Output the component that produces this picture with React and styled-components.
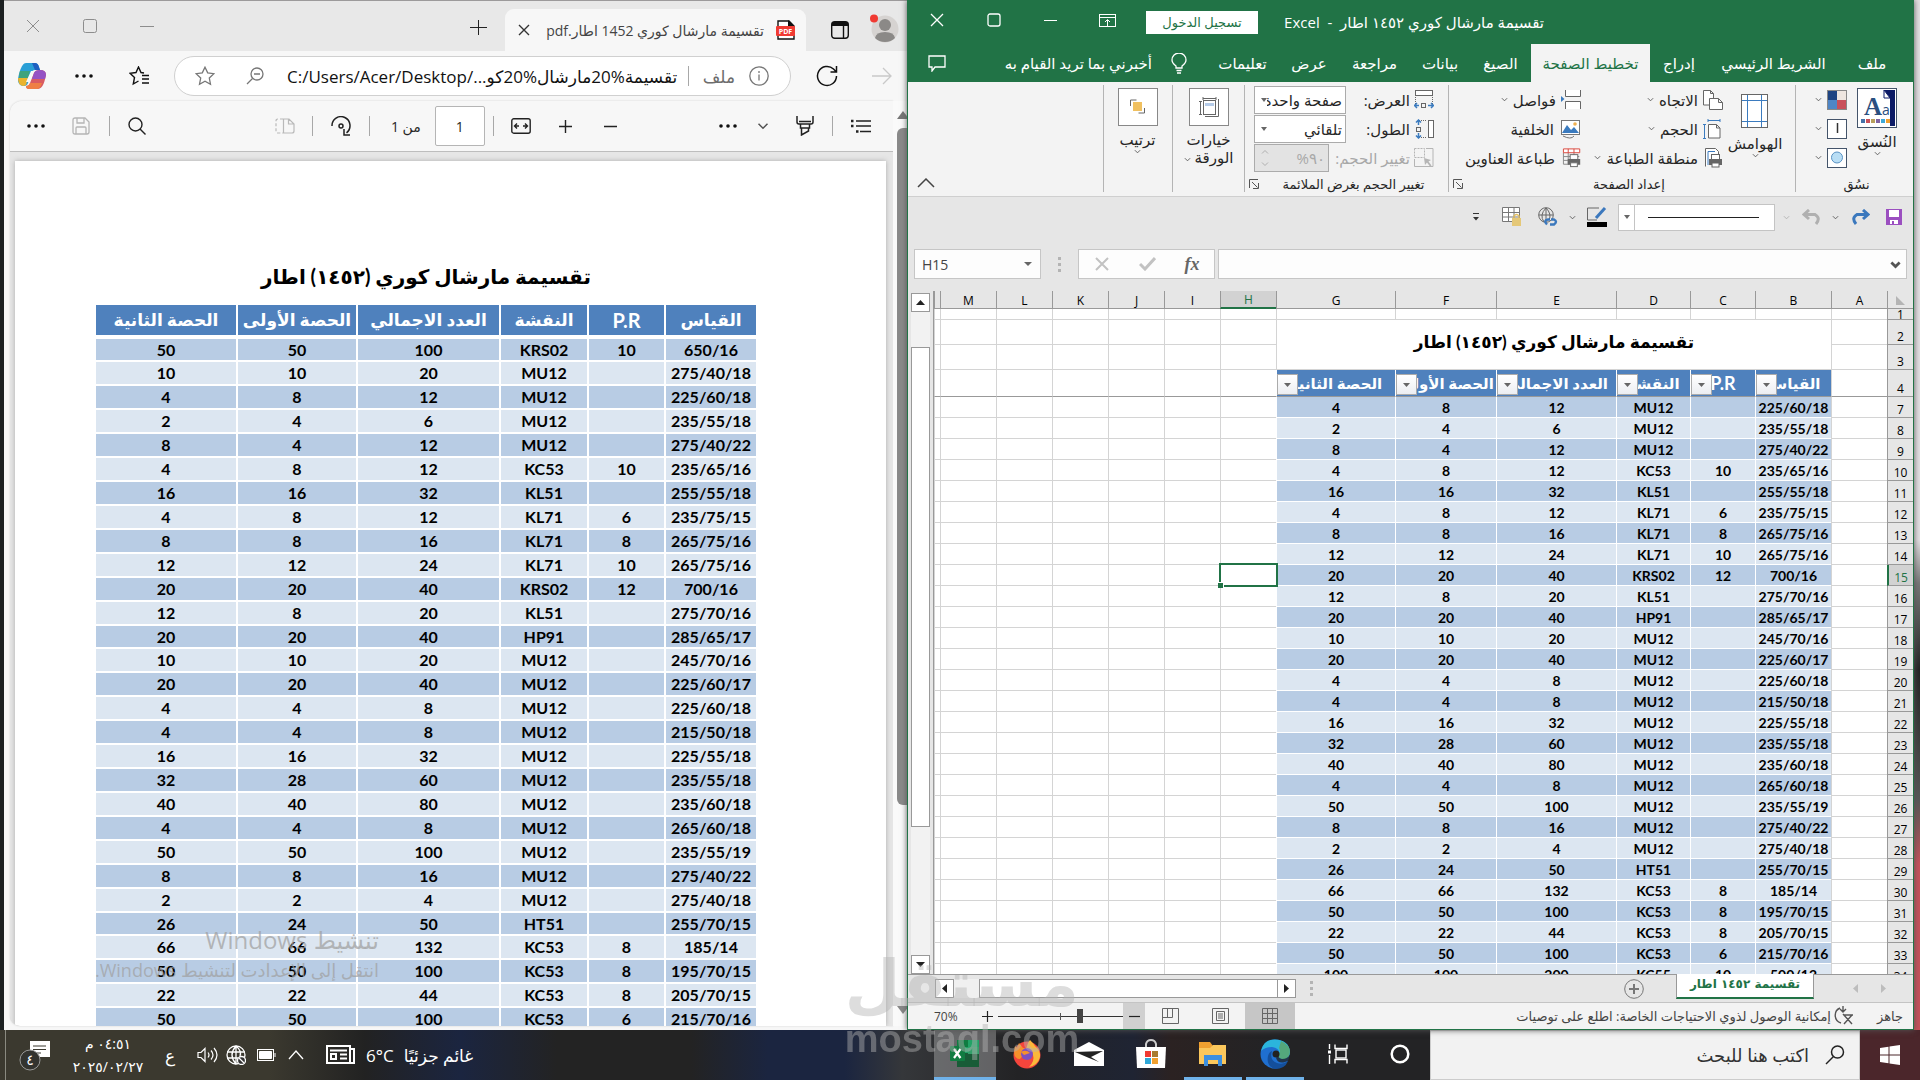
import React from "react";
import styled, { createGlobalStyle, css } from "styled-components";

const GlobalStyle = createGlobalStyle`
  * { box-sizing: border-box; }
  body {
    margin: 0;
    overflow: hidden;
    font-family: "Open Sans", "Noto Sans", "DejaVu Sans", sans-serif;
    font-size: 14px;
    color: #262626;
  }
  button, input, select {
    font: inherit;
    color: inherit;
    border: 0;
    padding: 0;
    margin: 0;
    background: none;
  }
  svg { direction: ltr; }
`;

const PLAN = [
  ["650/16", "10", "KRS02", 100, 50, 50],
  ["275/40/18", "", "MU12", 20, 10, 10],
  ["225/60/18", "", "MU12", 12, 8, 4],
  ["235/55/18", "", "MU12", 6, 4, 2],
  ["275/40/22", "", "MU12", 12, 4, 8],
  ["235/65/16", "10", "KC53", 12, 8, 4],
  ["255/55/18", "", "KL51", 32, 16, 16],
  ["235/75/15", "6", "KL71", 12, 8, 4],
  ["265/75/16", "8", "KL71", 16, 8, 8],
  ["265/75/16", "10", "KL71", 24, 12, 12],
  ["700/16", "12", "KRS02", 40, 20, 20],
  ["275/70/16", "", "KL51", 20, 8, 12],
  ["285/65/17", "", "HP91", 40, 20, 20],
  ["245/70/16", "", "MU12", 20, 10, 10],
  ["225/60/17", "", "MU12", 40, 20, 20],
  ["225/60/18", "", "MU12", 8, 4, 4],
  ["215/50/18", "", "MU12", 8, 4, 4],
  ["225/55/18", "", "MU12", 32, 16, 16],
  ["235/55/18", "", "MU12", 60, 28, 32],
  ["235/60/18", "", "MU12", 80, 40, 40],
  ["265/60/18", "", "MU12", 8, 4, 4],
  ["235/55/19", "", "MU12", 100, 50, 50],
  ["275/40/22", "", "MU12", 16, 8, 8],
  ["275/40/18", "", "MU12", 4, 2, 2],
  ["255/70/15", "", "HT51", 50, 24, 26],
  ["185/14", "8", "KC53", 132, 66, 66],
  ["195/70/15", "8", "KC53", 100, 50, 50],
  ["205/70/15", "8", "KC53", 44, 22, 22],
  ["215/70/16", "6", "KC53", 100, 50, 50],
  ["500/12", "10", "KC55", 200, 100, 100],
];

const HEADINGS = ["القياس", "P.R", "النقشة", "العدد الاجمالي", "الحصة الأولى", "الحصة الثانية"];
const TITLE = "تقسيمة مارشال كوري (١٤٥٢) اطار";

/* ---------- shared ---------- */

const Icon = ({ s = 20, w, h, vb, children, sw = 1, color = "currentColor", fill = "none" }) => (
  <svg
    width={w || s}
    height={h || s}
    viewBox={vb || `0 0 ${w || s} ${h || s}`}
    fill={fill}
    stroke={color}
    strokeWidth={sw}
    aria-hidden="true">
    {children}
  </svg>
);

const Chevron = ({ color = "#555", s = 7, sw = 1 }) => (
  <Icon w={s} h={s} vb="0 0 8 8" color={color} sw={sw}>
    <path d="M1 2.5 4 5.5 7 2.5" />
  </Icon>
);

const IconBtn = styled.button`
  width: ${(p) => p.$w || 40}px;
  height: 100%;
  flex: none;
  display: flex;
  align-items: ${(p) => p.$align || "center"};
  justify-content: center;
  color: ${(p) => p.$color || "#222"};
  svg { flex: none; }
`;

const Spacer = styled.div`
  flex: ${(p) => p.$grow || 1};
`;

/* ---------- desktop ---------- */

const Desktop = styled.div`
  height: 100vh;
  display: grid;
  grid-template-rows: minmax(0, 1fr) 50px;
  background: linear-gradient(#e4e0e3 0 50%, #777 54%, #222 62%, #555 74%, #c8505a 80%);
`;

const Windows = styled.main`
  min-height: 0;
  display: grid;
  grid-template-columns: minmax(0, 903fr) minmax(0, 1007fr);
  padding-right: 6px;
  border-left: 4px solid #1c2021;
`;

/* ---------- browser window ---------- */

const Browser = styled.section`
  position: relative;
  min-height: 0;
  display: flex;
  flex-direction: column;
  background: #f7f7f7;
  border-top: 1px solid #9c9a9b;
  overflow: hidden;
`;

const TabStrip = styled.div`
  height: 50px;
  flex: none;
  display: flex;
  padding-right: 3px;
  background: #e8e8e8;
`;

const Tab = styled.div`
  width: 301px;
  margin: 8px 10px 0 9px;
  padding: 0 10px 0 12px;
  display: flex;
  align-items: center;
  gap: 12px;
  border-radius: 9px 9px 0 0;
  background: #f7f7f7;
  color: #444;
  span { flex: 1; font-size: 14px; white-space: nowrap; direction: rtl; }
`;

const AddressRow = styled.div`
  height: 50px;
  flex: none;
  display: flex;
  align-items: center;
  padding-right: 6px;
`;

const AddressBox = styled.div`
  flex: 1;
  height: 40px;
  margin-left: 4px;
  display: flex;
  align-items: center;
  border: 1px solid #d0d0d0;
  border-radius: 20px;
  background: #fff;
  padding-right: 21px;
`;

const UrlInput = styled.input`
  flex: 1;
  min-width: 0;
  margin-left: 12px;
  font-size: 17px;
  color: #111;
  outline: 0;
`;

const Divider = styled.i`
  width: 1px;
  height: 20px;
  flex: none;
  background: #a8a8a8;
`;

const FileChip = styled.span`
  margin: 0 14px 0 14px;
  font-size: 17px;
  color: #6d6d6d;
`;

const PdfPane = styled.div`
  flex: 1;
  min-height: 0;
  display: grid;
  grid-template-columns: minmax(0, 1fr) 14px;
  padding: 0 0 4px 6px;
`;

const PdfMain = styled.div`
  min-height: 0;
  display: flex;
  flex-direction: column;
  border-radius: 12px 0 0 10px;
  box-shadow: 0 0 2px #ccc;
  overflow: hidden;
  background: #e6e6e6;
`;

const PdfBar = styled.div`
  height: 51px;
  flex: none;
  display: flex;
  align-items: center;
  padding-right: 4px;
  background: #f7f7f7;
  border-bottom: 1px solid #bdbdbd;
`;

const PageInput = styled.input`
  width: 50px;
  height: 40px;
  margin-right: 8px;
  text-align: center;
  border: 1px solid #b5b5b5;
  border-radius: 2px;
  background: #fff;
`;

const PageTotal = styled.label`
  width: 58px;
  text-align: center;
  direction: rtl;
  font-size: 14px;
`;

const Paper = styled.article`
  flex: 1;
  min-height: 0;
  margin: 9px 7px 0 5px;
  padding: 97px 0 0 81px;
  overflow: hidden;
  background: #fff;
  box-shadow: 0 0 5px #aaa;
`;

const PaperTitle = styled.h1`
  width: 660px;
  height: 47px;
  margin: 0;
  text-align: center;
  direction: rtl;
  font: bold 20px/36px "Lato", "DejaVu Sans", sans-serif;
  color: #000;
`;

const PaperTable = styled.table`
  width: 660px;
  table-layout: fixed;
  border-collapse: separate;
  border-spacing: 0;
  direction: rtl;
  text-align: center;
  font: bold 16px/20px "Lato", "DejaVu Sans", sans-serif;
  color: #000;
  th, td {
    padding: 0;
    white-space: nowrap;
    border-left: 2px solid #fff;
    border-bottom: 2px solid #fff;
  }
  th:last-child, td:last-child { border-left: 0; }
  th {
    height: 34px;
    background: #4f81bd;
    border-bottom-width: 4px;
    color: #fff;
    font-size: 17px;
    line-height: 30px;
  }
  th:nth-child(2) { font-size: 20px; }
  td { height: 24px; }
  tr:nth-child(12n + 1) td { height: 23px; line-height: 19px; }
  tbody tr:nth-child(odd) { background: #b8cce4; }
  tbody tr:nth-child(even) { background: #dce6f1; }
`;

const PdfScroll = styled.div`
  display: flex;
  flex-direction: column;
  align-items: flex-end;
  padding: 10px 0 12px;
  gap: 9px;
  background: #fafafa;
`;

const PdfThumb = styled.div`
  width: 10px;
  flex: 0 0 75%;
  border-radius: 6px 0 0 6px;
  background: #8a8a8a;
`;

/* lies over the page, as the system draws it */
const Activation = styled.div`
  position: absolute;
  left: 92px;
  bottom: 47px;
  width: 283px;
  direction: rtl;
  white-space: nowrap;
  color: rgba(160, 160, 160, 0.72);
  p { margin: 0; font-size: 18px; line-height: 26px; }
  p:first-child { font-size: 24px; line-height: 34px; }
`;

const Dots = () => (
  <Icon w={18} h={4} fill="currentColor" color="none">
    <circle cx="2" cy="2" r="1.8" />
    <circle cx="9" cy="2" r="1.8" />
    <circle cx="16" cy="2" r="1.8" />
  </Icon>
);

const BrowserWindow = () => (
  <Browser>
    <TabStrip>
      <IconBtn $w={57} $color="#8d8d8d" aria-label="إغلاق">
        <Icon s={14}><path d="M1 1 13 13M13 1 1 13" /></Icon>
      </IconBtn>
      <IconBtn $w={57} $color="#8d8d8d" aria-label="تكبير">
        <Icon s={14}><rect x=".5" y=".5" width="13" height="13" rx="2" /></Icon>
      </IconBtn>
      <IconBtn $w={57} $color="#8d8d8d" aria-label="تصغير">
        <Icon s={14}><path d="M0 7.5H14" /></Icon>
      </IconBtn>
      <Spacer />
      <IconBtn $w={36} aria-label="علامة تبويب جديدة">
        <Icon s={18}><path d="M9.500 3v16M1 10.500h17" /></Icon>
      </IconBtn>
      <Tab>
        <IconBtn $w={14} $color="#333" aria-label="إغلاق علامة التبويب">
          <Icon s={12} sw={1.4}><path d="M1 1 11 11M11 1 1 11" /></Icon>
        </IconBtn>
        <span>تقسيمة مارشال كوري 1452 اطار.pdf</span>
        <svg width="20" height="20" viewBox="0 0 20 20">
          <path d="M2 1h11l5 5v13H2z" fill="#fff" stroke="#111" strokeWidth="1.4" />
          <path d="M12 0v6h6z" fill="#111" />
          <rect x="0" y="6" width="19" height="10" rx="1" fill="#f03a32" />
          <text x="9.500" y="14" fontSize="7" fontWeight="bold" fill="#fff" textAnchor="middle">PDF</text>
        </svg>
      </Tab>
      <IconBtn $w={48} $color="#111" aria-label="قائمة علامات التبويب">
        <Icon s={18} h={26} sw={1.4}>
          <rect x=".7" y="8.700" width="16.600" height="16.600" rx="3" />
          <path d="M1 11h16" strokeWidth="4" />
          <path d="M12.500 12v13" />
        </Icon>
      </IconBtn>
      <IconBtn $w={40} aria-label="ملف التعريف">
        <svg width="30" height="34" viewBox="0 -4 30 34">
          <circle cx="16" cy="16" r="13.500" fill="#d6d3d1" />
          <circle cx="16" cy="12" r="6" fill="#8b8987" />
          <path d="M6 25q1-6 10-6t10 6q-4 4-10 4T6 25" fill="#8b8987" />
          <circle cx="5" cy="5.500" r="4" fill="#f03a32" />
        </svg>
      </IconBtn>
    </TabStrip>

    <AddressRow>
      <IconBtn $w={56} aria-label="Copilot">
        <svg width="28" height="28" viewBox="0 0 28 28">
          <path d="M8 1h9q3 0 4 4l1 3h-5q-3 0-4 4l-3 9q-1 3-4 3-5 0-6-5c0-4 3-18 8-18" fill="#2a9fd6" />
          <path d="M17 1q3 0 4 4l1 3h-5l-3-7z" fill="#1f5fc0" />
          <path d="M2 9h10l-2 7H1q0-4 1-7" fill="#3fa37c" />
          <path d="M0 16h10l-2 7q-1 1-3 1-5-1-5-8" fill="#eab42e" />
          <path d="M22 8q6 0 6 5c-1 5-3 14-8 14h-9q-3 0-3-3 3 0 4-3l4-10q1-3 6-3" fill="#d95b62" />
          <path d="M22 8q6 0 6 5l-1 4H14l2-6q1-3 6-3" fill="#9552c4" />
          <path d="M11 27q-3 0-3-3 3 0 4-3h12q-2 6-5 6z" fill="#ef7f45" />
          <path d="M13 9h4q-2 1-3 4l-3 7h-3z" fill="#f7f7f7" />
        </svg>
      </IconBtn>
      <IconBtn $w={48} $color="#111" aria-label="المزيد"><Dots /></IconBtn>
      <IconBtn $w={62} $color="#111" aria-label="المفضلة">
        <Icon w={21} h={20} sw={1.4}>
          <path d="m15 7-3-.5L9.500 1 7 6.500 1 7.300l4.500 4.200L4.300 18l5.200-3M13 9.500h7M13 13h7M13 17h7" />
        </Icon>
      </IconBtn>
      <AddressBox>
        <IconBtn $w={60} $color="#777" aria-label="إضافة إلى المفضلة">
          <Icon s={20} sw={1.3}>
            <path d="M10 1.200l2.700 5.700 6.200.8-4.600 4.300 1.200 6.200L10 15.200l-5.500 3 1.200-6.200L1.100 7.700l6.200-.8z" />
          </Icon>
        </IconBtn>
        <IconBtn $w={40} $color="#777" aria-label="تصغير العرض">
          <Icon s={18} sw={1.3}>
            <circle cx="11" cy="7" r="6" />
            <path d="M6.500 11.500 1 17M8 7h6" />
          </Icon>
        </IconBtn>
        <UrlInput
          aria-label="العنوان"
          defaultValue={"C:/Users/Acer/Desktop/\u2067تقسيمة%20مارشال%20كو...\u2069"}
        />
        <Divider />
        <FileChip>ملف</FileChip>
        <Icon s={20} sw={1.3} color="#777">
          <circle cx="10" cy="10" r="9.200" />
          <path d="M10 8.500v6M10 5v2" />
        </Icon>
      </AddressBox>
      <IconBtn $w={72} $color="#111" aria-label="تحديث">
        <Icon s={22} sw={1.5}>
          <path d="M20.500 11a9.500 9.500 0 1 1-3-7l2.500 2.500M20.500 1v6h-6" />
        </Icon>
      </IconBtn>
      <IconBtn $w={38} $color="#c9c9c9" aria-label="للأمام">
        <Icon s={20} sw={1.3}><path d="M0 10h19M11 2l8 8-8 8" /></Icon>
      </IconBtn>
    </AddressRow>

    <PdfPane>
      <PdfMain>
        <PdfBar>
          <IconBtn $w={52} $color="#111" aria-label="خيارات"><Dots /></IconBtn>
          <IconBtn $w={38} $color="#b5b5b5" aria-label="حفظ">
            <Icon s={18} sw={1.3}>
              <path d="M3 1h10l4 4v10q0 2-2 2H3q-2 0-2-2V3q0-2 2-2M5 1v5h7V1M4 17v-6q0-1 1-1h8q1 0 1 1v6" />
            </Icon>
          </IconBtn>
          <IconBtn as="span" $w={18}><Divider /></IconBtn>
          <IconBtn $w={38} aria-label="بحث">
            <Icon s={18} sw={1.4}><circle cx="7.500" cy="7.500" r="6.500" /><path d="m12 12 5.500 5.500" /></Icon>
          </IconBtn>
          <Spacer $grow={11} />
          <IconBtn $w={40} $color="#b9b9b9" aria-label="عرض الصفحة">
            <Icon w={20} h={16} sw={1.2}>
              <path d="M8 1H3Q1 1 1 3v10q0 2 2 2h5" strokeDasharray="3 2" />
              <path d="M8.500 1H14l5 5v7q0 2-2 2H8.500zM13.500 1v5H19" />
            </Icon>
          </IconBtn>
          <IconBtn as="span" $w={15}><Divider /></IconBtn>
          <IconBtn $w={42} aria-label="استدارة">
            <Icon w={20} h={20} sw={1.5}>
              <path d="M1 10a9 9 0 1 1 14.500 6.800M13 13v6h6" />
              <circle cx="10" cy="10" r="2" />
            </Icon>
          </IconBtn>
          <IconBtn as="span" $w={15}><Divider /></IconBtn>
          <PageTotal htmlFor="page">من 1</PageTotal>
          <PageInput id="page" defaultValue="1" />
          <Divider />
          <IconBtn $w={54} aria-label="ملاءمة العرض">
            <Icon w={20} h={16} sw={1.4}>
              <rect x=".8" y=".8" width="18.400" height="14.400" rx="2" />
              <path d="M8 8H3.500M6 5.500 3.500 8 6 10.500M12 8h4.500M14 5.500 16.500 8 14 10.500" />
            </Icon>
          </IconBtn>
          <IconBtn $w={35} aria-label="تكبير">
            <Icon s={15} sw={1.4}><path d="M7.500 1v13M1 7.500h13" /></Icon>
          </IconBtn>
          <IconBtn $w={56} aria-label="تصغير">
            <Icon s={13} sw={1.4}><path d="M0 6.500h13" /></Icon>
          </IconBtn>
          <Spacer $grow={7} />
          <IconBtn $w={40} $color="#111" aria-label="المزيد"><Dots /></IconBtn>
          <IconBtn $w={30} aria-label="خيارات التمييز"><Chevron s={12} /></IconBtn>
          <IconBtn $w={54} aria-label="تمييز">
            <Icon w={18} h={20} sw={1.5}>
              <path d="M1 0v6q0 2 2 2h12q2 0 2-2V0M3 5.500h12M4.500 8v4h9V8M5.500 12v7l7-4v-3" />
            </Icon>
          </IconBtn>
          <Divider />
          <IconBtn $w={56} aria-label="جدول المحتويات">
            <Icon w={20} h={14} sw={1.5}>
              <path d="M5 2h15M5 7h15M9 12.500h11" />
              <path d="M0 2h2.500M0 7h2.500M5 12.500h2.500" strokeWidth="2.500" />
            </Icon>
          </IconBtn>
        </PdfBar>
        <Paper>
          <PaperTitle>{TITLE}</PaperTitle>
          <PaperTable>
            <colgroup>
              {[92, 77, 88, 143, 120, 140].map((w, i) => <col key={i} width={w} />)}
            </colgroup>
            <thead>
              <tr>{HEADINGS.map((h) => <th key={h} scope="col">{h}</th>)}</tr>
            </thead>
            <tbody>
              {PLAN.slice(0, 29).map((row, i) => (
                <tr key={i}>{row.map((c, j) => <td key={j}>{c}</td>)}</tr>
              ))}
            </tbody>
          </PaperTable>
        </Paper>
      </PdfMain>
      <PdfScroll>
        <Icon w={10} h={8} fill="#777" color="none"><path d="M0 8 6 0l6 8z" /></Icon>
        <PdfThumb />
        <Spacer />
        <Icon w={10} h={8} fill="#888" color="none"><path d="M0 0h12L6 8z" /></Icon>
      </PdfScroll>
    </PdfPane>

    <Activation>
      <p>تنشيط Windows</p>
      <p>انتقل إلى الإعدادت لتنشيط Windows.</p>
    </Activation>
  </Browser>
);

/* ---------- spreadsheet window ---------- */

const Book = styled.section`
  min-height: 0;
  min-width: 0;
  display: flex;
  flex-direction: column;
  direction: rtl;
  background: #e6e6e6;
  border: 1px solid #217346;
  border-top: 0;
  box-shadow: 0 0 6px #555;
  z-index: 1;
`;

const TitleBar = styled.header`
  height: 44px;
  flex: none;
  display: flex;
  align-items: center;
  padding-inline-start: 369px;
  background: #217346;
  color: #fff;
  font-size: 13px;
  white-space: pre;
  svg { margin-bottom: 4px; }
`;

const DocTitle = styled.span`
  width: 266px;
  font-size: 15px;
`;

const SignIn = styled.button`
  width: 112px;
  height: 23px;
  margin-inline-start: 20px;
  background: #fff;
  color: #217346;
`;

const RibbonTabs = styled.nav`
  height: 38px;
  flex: none;
  display: flex;
  align-items: center;
  padding-inline-start: 8px;
  background: #217346;
  color: #fff;
  font-size: 15px;
  white-space: nowrap;
`;

const RibbonTab = styled.button`
  width: ${(p) => p.$w}px;
  height: 38px;
  white-space: nowrap;
  ${(p) => p.$active && css`
    background: #f3f3f3;
    color: #217346;
  `}
`;

const Ribbon = styled.div`
  height: 115px;
  flex: none;
  display: flex;
  padding: 3px 0 2px;
  background: #f3f3f3;
  border-bottom: 1px solid #cfcfcf;
  font-size: 15px;
`;

const Group = styled.div`
  width: ${(p) => p.$w}px;
  margin-bottom: 2px;
  display: flex;
  flex-direction: column;
  border-left: 1px solid #b4b4b4;
`;

const GroupBody = styled.div`
  flex: 1;
  display: flex;
  gap: 4px;
  padding-inline-start: ${(p) => p.$pad || 12}px;
`;

const GroupFoot = styled.div`
  height: 17px;
  display: flex;
  align-items: center;
  font-size: 13px;
  padding-left: 4px;
  span { flex: 1; text-align: center; white-space: nowrap; }
`;

const BigBtn = styled.button`
  width: ${(p) => p.$w || 60}px;
  margin-top: 3px;
  display: flex;
  flex-direction: column;
  align-items: center;
  align-self: flex-start;
  line-height: 18px;
  white-space: nowrap;
  > svg:first-child { margin-bottom: 4px; }
`;

const Stack = styled.div`
  display: flex;
  flex-direction: column;
  width: ${(p) => p.$w}px;
`;

const SmallBtn = styled.button`
  height: 29px;
  display: flex;
  align-items: center;
  gap: 5px;
  white-space: nowrap;
  svg:last-child { margin-inline-start: ${(p) => (p.$wide ? 5 : 2)}px; }
`;

const Field = styled.label`
  height: 29px;
  display: flex;
  align-items: center;
  gap: 4px;
  color: ${(p) => (p.$off ? "#a8a8a8" : "inherit")};
  white-space: nowrap;
  span { flex: 1; }
`;

const Combo = styled.span`
  && {
    width: ${(p) => p.$w || 92}px;
    height: 28px;
    flex: none;
    display: flex;
    align-items: center;
    padding-left: 6px;
    border: 1px solid #ababab;
    background: ${(p) => (p.$off ? "#e3e3e3" : "#fff")};
  }
  select, input {
    flex: 1;
    min-width: 0;
    appearance: none;
    outline: 0;
    color: inherit;
    opacity: 1;
    padding-right: 3px;
    direction: rtl;
  }
`;

const Caret = ({ w = 7 }) => (
  <Icon w={w} h={4} fill="#666" color="none"><path d={`M0 0h${w}L${w / 2} 4z`} /></Icon>
);

const QuickBar = styled.div`
  height: 40px;
  flex: none;
  display: flex;
  align-items: center;
  padding-inline-start: 7px;
`;

const LineStyle = styled.button`
  width: 157px;
  height: 27px;
  display: flex;
  align-items: center;
  border: 1px solid #c4c4c4;
  background: #fff;
  i { flex: 1; margin: 0 15px 0 13px; height: 1px; background: #222; }
  span { width: 16px; height: 100%; display: grid; place-items: center; border-right: 1px solid #c4c4c4; }
`;

const FormulaRow = styled.div`
  height: 30px;
  flex: none;
  margin: 12px 6px 12px;
  display: flex;
  direction: ltr;
  align-items: stretch;
`;

const NameBox = styled.div`
  width: 127px;
  display: flex;
  align-items: center;
  padding: 0 8px 0 7px;
  border: 1px solid #c6c6c6;
  background: #fdfdfd;
  input { flex: 1; min-width: 0; font-size: 14px; color: #444; outline: 0; }
`;

const Grip = styled.i`
  width: 3px;
  height: 15px;
  flex: none;
  align-self: center;
  border-block: 3px solid #b4b4b4;
  background: linear-gradient(transparent 3px, #b4b4b4 3px 6px, transparent 6px);
`;

const FxButtons = styled.div`
  width: 137px;
  display: flex;
  justify-content: center;
  border: 1px solid #c6c6c6;
  background: #fdfdfd;
  em { font: italic bold 18px "Liberation Serif", serif; color: #666; }
`;

const FormulaInput = styled.div`
  flex: 1;
  margin-left: 3px;
  display: flex;
  border: 1px solid #c6c6c6;
  background: #fdfdfd;
  input { flex: 1; outline: 0; }
`;

const SheetArea = styled.div`
  flex: 1;
  min-height: 0;
  display: flex;
  overflow: hidden;
  border-bottom: 1px solid #999;
`;

const GridPane = styled.div`
  flex: 1;
  min-width: 0;
`;

const Grid = styled.table`
  width: 100%;
  table-layout: fixed;
  border-collapse: separate;
  border-spacing: 0;
  background: #fff;
  text-align: center;
  font: bold 14px/16px "Lato", "DejaVu Sans", sans-serif;
  color: #000;
  th, td {
    padding: 0;
    border-left: 1px solid #d4d4d4;
    border-bottom: 1px solid #d4d4d4;
    white-space: nowrap;
  }
  td { padding-top: 2px; }
  thead th {
    height: 17px;
    padding-top: 2px;
    background: #e6e6e6;
    border-color: #999;
    font: 12px/14px "Open Sans", sans-serif;
  }
  tbody th {
    background: #e6e6e6;
    border-color: #999;
    vertical-align: bottom;
    font: 12px/14px "Open Sans", sans-serif;
  }
`;

const ColHead = styled.th`
  ${(p) => p.$on && css`
    && { background: #d2d2d2; color: #217346; border-bottom: 2px solid #217346; }
  `}
`;

const RowHead = styled.th`
  && {
    height: ${(p) => p.$h || 21}px;
    ${(p) => p.$on && "background: #d2d2d2; color: #217346; border-left: 2px solid #217346;"}
  }
  div { height: 9px; line-height: 9px; }
`;

const Cell = styled.td`
  ${(p) => p.$tone && css`
    && {
      background: ${p.$tone};
      border-color: #fff;
    }
  `}
  ${(p) => p.$freeze && css`
    && { border-bottom-color: #999; }
  `}
`;

const TitleCell = styled.td`
  && {
    font-size: 17px;
    line-height: 28px;
    vertical-align: top;
    padding-top: 8px;
  }
`;

const HeadCell = styled.td`
  && {
    position: relative;
    overflow: hidden;
    background: #4f81bd;
    color: #fff;
    font-size: ${(p) => (p.$latin ? 18 : 15)}px;
    line-height: 22px;
    padding-top: 0;
    border-left-color: #fff;
    border-bottom-color: #999;
  }
`;

const FilterBtn = styled.button`
  position: absolute;
  left: 0;
  bottom: 1px;
  width: 21px;
  height: 21px;
  display: grid;
  place-items: center;
  border: 1px solid #ababab;
  background: linear-gradient(#fff, #eceef2);
`;

/* outline lies over the neighbouring grid lines */
const Selected = styled.td`
  position: relative;
  &::before {
    content: "";
    position: absolute;
    inset: -2px -2px -2px -2px;
    border: 2px solid #217346;
  }
  &::after {
    content: "";
    position: absolute;
    left: -3px;
    bottom: -3px;
    width: 5px;
    height: 5px;
    background: #217346;
    border: 1px solid #fff;
    border-left: 0;
    border-bottom: 0;
  }
`;

const VScroll = styled.div`
  width: 26px;
  flex: none;
  order: 2;
  display: flex;
  flex-direction: column;
  align-items: center;
  padding: 2px 3px 0 3px;
  border-right: 1px solid #999;
`;

const ArrowBtn = styled.button`
  width: 19px;
  height: 19px;
  flex: none;
  display: grid;
  place-items: center;
  border: 1px solid #999;
  background: #fff;
`;

const VTrack = styled.div`
  flex: 1;
  width: 19px;
  padding-top: 35px;
  background: #f2f2f2;
  i { display: block; height: 79%; border: 1px solid #999; background: #fff; }
`;

const SheetBar = styled.div`
  height: 28px;
  flex: none;
  display: flex;
  align-items: center;
  padding: 0 16px 0 27px;
  border-bottom: 1px solid #c4c4c4;
`;

const SheetTab = styled.button`
  width: 138px;
  height: 25px;
  align-self: flex-start;
  margin: -1px 27px 0 32px;
  padding-bottom: 4px;
  background: #fff;
  color: #217346;
  font: bold 12px/18px "DejaVu Sans", sans-serif;
  white-space: nowrap;
  border: 1px solid #999;
  border-top: 0;
  border-bottom: 2px solid #217346;
`;

const HScroll = styled.div`
  width: 361px;
  display: flex;
  direction: ltr;
  background: #f0f0f0;
  i { flex: 1; margin-left: 25px; border: 1px solid #999; border-right: 0; background: #fff; }
`;

const StatusBar = styled.footer`
  height: 26px;
  flex: none;
  display: flex;
  align-items: center;
  padding: 0 10px 0 26px;
  background: #f3f3f3;
  font-size: 13px;
  color: #444;
  white-space: nowrap;
`;

const ZoomLevel = styled.span`
  width: 42px;
  font-size: 12px;
  text-align: left;
  direction: ltr;
`;

const ViewBtn = styled.button`
  width: 50px;
  height: 100%;
  display: grid;
  place-items: center;
  color: #666;
  background: ${(p) => (p.$on ? "#c6c6c6" : "none")};
`;

const ZoomBtn = styled.button`
  width: ${(p) => p.$w}px;
  height: 100%;
  display: grid;
  place-items: center;
  color: #222;
  background: ${(p) => (p.$on ? "#d0d0d0" : "none")};
`;

const ZoomSlider = styled.input`
  appearance: none;
  width: 125px;
  height: 20px;
  direction: rtl;
  background:
    linear-gradient(#555, #555) center / 1px 7px no-repeat,
    linear-gradient(#333, #333) center / 100% 1px no-repeat;
  &::-webkit-slider-thumb {
    appearance: none;
    width: 6px;
    height: 14px;
    background: #444;
  }
`;

const MENU = [
  ["ملف", 66],
  ["الشريط الرئيسي", 131],
  ["إدراج", 58],
  ["تخطيط الصفحة", 119],
  ["الصيغ", 61],
  ["بيانات", 60],
  ["مراجعة", 71],
  ["عرض", 60],
  ["تعليمات", 73],
];

const COLS = [
  ["A", 56], ["B", 76], ["C", 65], ["D", 74], ["E", 120], ["F", 101], ["G", 119],
  ["H", 56], ["I", 56], ["J", 56], ["K", 56], ["L", 56], ["M", 56],
];

const Empty = ({ n, freeze }) =>
  Array.from({ length: n }, (_, i) => <Cell key={i} $freeze={freeze} />);

const PrinterIcon = () => (
  <g>
    <rect x="8.500" y="6.500" width="8" height="5" fill="#fff" stroke="#666" />
    <path d="M6 11h13v6h-3v-2H9v2H6z" fill="#666" stroke="none" />
    <rect x="9" y="15" width="7" height="4" fill="#fff" stroke="#666" />
  </g>
);

const Launcher = () => (
  <Icon s={10} color="#555">
    <path d="M.5 9V.5H9M3 3l5.500 5.500M9.500 4v5.500H4" />
  </Icon>
);

const RibbonBar = () => (
  <Ribbon>
    <Group $w={118}>
      <GroupBody $pad={10}>
        <BigBtn $w={52}>
          <svg width="40" height="40" viewBox="0 0 40 40">
            <rect x=".5" y=".5" width="39" height="39" fill="#fff" stroke="#44546a" />
            <path d="M27 2h11v36h-5V10z" fill="#0c1a66" />
            <path d="M27 2v8h6z" fill="#fff" stroke="#0c1a66" />
            <text x="7" y="27" fontFamily="Liberation Serif" fontWeight="bold" fontSize="25" fill="#2a4f80">A</text>
            <text x="25" y="27" fontFamily="Open Sans" fontSize="14" fill="#2a4f80">a</text>
            {["#4472a8", "#c8505a", "#b8a05c", "#8064a2", "#3fa9d8", "#f0a030"].map((c, i) => (
              <rect key={c} x={4 + i * 5} y="31" width="4" height="4" fill={c} />
            ))}
          </svg>
          النُسق
          <Chevron />
        </BigBtn>
        <Stack $w={36}>
          <SmallBtn aria-label="ألوان">
            <svg width="20" height="20">
              <rect x=".5" y=".5" width="19" height="19" fill="#eee6e0" stroke="#888" />
              <path d="M1 1h9v9H1z" fill="#1f4583" /><path d="M1 10h9v9H1z" fill="#4f86c6" />
              <path d="M10 10h9v9h-9z" fill="#c8505a" />
            </svg>
            <Chevron />
          </SmallBtn>
          <SmallBtn aria-label="خطوط">
            <svg width="20" height="20">
              <rect x=".5" y=".5" width="19" height="19" fill="#fff" stroke="#44546a" />
              <path d="M10.500 4v10" stroke="#333" strokeWidth="1.500" />
            </svg>
            <Chevron />
          </SmallBtn>
          <SmallBtn aria-label="تأثيرات">
            <svg width="20" height="20">
              <rect x=".5" y=".5" width="19" height="19" fill="#fff" stroke="#44546a" />
              <circle cx="10" cy="9.500" r="5.500" fill="#b9def5" stroke="#5b93c4" />
            </svg>
            <Chevron />
          </SmallBtn>
        </Stack>
      </GroupBody>
      <GroupFoot><span>نسُق</span></GroupFoot>
    </Group>

    <Group $w={347}>
      <GroupBody>
        <BigBtn $w={56}>
          <svg width="28" height="42" viewBox="0 -5 28 40">
            <rect x=".5" y=".5" width="26" height="33" fill="#fff" stroke="#666" />
            <path d="M6.500 1v32M20.500 1v32M1 6.500h25M1 27.500h25" stroke="#3b7bbf" />
          </svg>
          الهوامش
          <Chevron />
        </BigBtn>
        <Stack $w={138}>
          <SmallBtn $wide>
            <Icon s={20} color="#666">
              <path d="M.5.500h7l3 3V15H.500zM7.500.5v3h3" fill="#fff" />
              <path d="M6.500 8.500h9l4 4v7h-13zM15.500 8.500v4h4" fill="#fff" />
            </Icon>
            الاتجاه
            <Chevron />
          </SmallBtn>
          <SmallBtn $wide>
            <Icon s={20} color="#666">
              <path d="M5.500 5.500h8l3.500 3.500v10H5.500zM13.500 5.500V9H17" fill="#fff" />
              <path d="M5 1.500h12M5 0v3M17 0v3M1.500 5v14M0 5.500h3M0 19.500h3" stroke="#3b7bbf" />
            </Icon>
            الحجم
            <Chevron />
          </SmallBtn>
          <SmallBtn>
            <Icon s={20} color="#666">
              <path d="M2.500 18.500V.5h10l3 3V8" fill="#fff" />
              <path d="M5 17V3.500h7" stroke="#3b7bbf" />
              <PrinterIcon />
            </Icon>
            منطقة الطباعة
            <Chevron />
          </SmallBtn>
        </Stack>
        <Stack $w={116}>
          <SmallBtn $wide>
            <Icon s={20} color="#666">
              <path d="M4.500 0v6.500h15V0M4.500 19v-7.500h15V19" fill="#fff" />
              <path d="M0 6v6l3.500-3z" fill="#3b7bbf" stroke="none" />
            </Icon>
            فواصل
            <Chevron />
          </SmallBtn>
          <SmallBtn>
            <Icon s={20} color="#777">
              <rect x=".5" y="1.500" width="18" height="14" fill="#fff" />
              <path d="M1 14 6 6l4 5 3-3 5 6z" fill="#3b7bbf" stroke="none" />
              <circle cx="14" cy="5" r="1.800" fill="#f0b050" stroke="none" />
              <path d="M2 17q8 4 11 0" />
            </Icon>
            الخلفية
          </SmallBtn>
          <SmallBtn>
            <Icon s={20} color="#888">
              <path d="M1.500 4.500v12H8M1.500 8.500H18M1.500 12.500H8M6.500 4v12M12.500 4v4" />
              <path d="M1.500.500h17v4h-17zM6.500.5v4M12.500.5v4" stroke="#d9463c" fill="#fff" />
              <PrinterIcon />
            </Icon>
            طباعة العناوين
          </SmallBtn>
        </Stack>
      </GroupBody>
      <GroupFoot><span>إعداد الصفحة</span><Launcher /></GroupFoot>
    </Group>

    <Group $w={204}>
      <GroupBody $pad={14}>
        <Stack $w={180}>
          <Field>
            <Icon s={20} color="#666">
              <rect x="1.500" y=".5" width="17" height="5" fill="#fff" />
              <path d="M1.500 7v9M18.500 7v9" strokeDasharray="1 1" />
              <rect x="7.500" y="13.500" width="4" height="4" />
              <path d="M5 15.500H1M3 13l-2.500 2.500L3 18M14 15.500h5M17 13l2.500 2.500L17 18" stroke="#3b7bbf" strokeWidth="1.500" />
            </Icon>
            <span>العرض:</span>
            <Combo>
              <select aria-label="العرض"><option>صفحة واحدة</option></select>
              <Caret w={6} />
            </Combo>
          </Field>
          <Field>
            <Icon s={20} color="#666">
              <rect x="14.500" y="1.500" width="5" height="17" fill="#fff" />
              <path d="M5 1.500h8M5 18.500h8" strokeDasharray="1 1" />
              <rect x="2.500" y="8.500" width="4" height="4" />
              <path d="M4.500 6V1M2 3.500 4.500 1 7 3.500M4.500 14v5M2 16.500 4.500 19 7 16.500" stroke="#3b7bbf" strokeWidth="1.500" />
            </Icon>
            <span>الطول:</span>
            <Combo>
              <select aria-label="الطول"><option>تلقائي</option></select>
              <Caret w={6} />
            </Combo>
          </Field>
          <Field $off>
            <Icon s={20} color="#b5b5b5">
              <path d="M.5.500h10v9H.500z" strokeDasharray="2 1" />
              <path d="M12 .5h7v18H.500V11" />
              <path d="m10 10 7 2-2.500 1.500 3 4-1.500 1-3-4L11 17z" fill="#b5b5b5" stroke="none" />
            </Icon>
            <span>تغيير الحجم:</span>
            <Combo $w={75} $off>
              <input aria-label="تغيير الحجم" defaultValue="٩٠%" disabled />
              <Icon w={8} h={18} color="#b0b0b0"><path d="M1 4.500 4 1.500l3 3M1 13.500l3 3 3-3" /></Icon>
            </Combo>
          </Field>
        </Stack>
      </GroupBody>
      <GroupFoot><span>تغيير الحجم بغرض الملائمة</span><Launcher /></GroupFoot>
    </Group>

    <Group $w={72}>
      <BigBtn $w={71}>
        <svg width="40" height="38" viewBox="0 0 40 38">
          <rect x=".5" y=".5" width="39" height="37" fill="#fff" stroke="#888" />
          <rect x="14.500" y="12.500" width="12" height="14" fill="#fff" stroke="#666" />
          <path d="M16 15h9v3h-9z" fill="#b5cbe8" />
          <path d="M14 10.500h13M14 9v3M27 9v3M11.500 13v14M10 13.500h3M10 26.500h3M16 28.500h13.500V11" stroke="#666" fill="none" />
        </svg>
        خيارات
        <span>الورقة <Chevron /></span>
      </BigBtn>
    </Group>
    <Group $w={69}>
      <BigBtn $w={69}>
        <svg width="40" height="38" viewBox="0 0 40 38">
          <rect x=".5" y=".5" width="39" height="37" fill="#fff" stroke="#888" />
          <path d="M12.500 18v-6h6M26.500 20v5h-6" stroke="#666" fill="none" />
          <rect x="15" y="14" width="9" height="9" fill="#f0c060" />
        </svg>
        ترتيب
        <Chevron />
      </BigBtn>
    </Group>
    <Spacer />
    <IconBtn $w={36} $align="flex-end" aria-label="طي الشريط">
      <Icon w={18} h={16} sw={1.5} color="#444"><path d="m1 9 8-8 8 8" /></Icon>
    </IconBtn>
  </Ribbon>
);

const Worksheet = () => (
  <SheetArea>
    <GridPane>
      <Grid>
        <colgroup>
          <col width="26" />
          {COLS.map(([c, w]) => <col key={c} width={w} />)}
          <col />
        </colgroup>
        <thead>
          <tr>
            <th aria-label="تحديد الكل">
              <Icon w={9} h={9} fill="#b4b4b4" color="none"><path d="M0 0v9h9z" /></Icon>
            </th>
            {COLS.map(([c]) => <ColHead key={c} scope="col" $on={c === "H"}>{c}</ColHead>)}
            <th />
          </tr>
        </thead>
        <tbody>
          <tr>
            <RowHead scope="row" $h={11}><div>1</div></RowHead>
            <Empty n={14} />
          </tr>
          <tr>
            <RowHead scope="row" $h={25}>2</RowHead>
            <Empty n={1} />
            <TitleCell colSpan={6} rowSpan={2}>{TITLE}</TitleCell>
            <Empty n={7} />
          </tr>
          <tr>
            <RowHead scope="row" $h={25}>3</RowHead>
            <Empty n={8} />
          </tr>
          <tr>
            <RowHead scope="row" $h={27}>4</RowHead>
            <Empty n={1} freeze />
            {HEADINGS.map((h, i) => (
              <HeadCell key={h} $latin={i === 1}>
                {h}
                <FilterBtn aria-label={`تصفية ${h}`}><Caret /></FilterBtn>
              </HeadCell>
            ))}
            <Empty n={7} freeze />
          </tr>
          {PLAN.slice(2).map((row, i) => {
            const n = i + 7;
            const tone = i % 2 ? "#dce6f1" : "#b8cce4";
            return (
              <tr key={n}>
                <RowHead scope="row" $on={n === 15}>{n}</RowHead>
                <Empty n={1} />
                {row.map((c, j) => <Cell key={j} $tone={tone}>{c}</Cell>)}
                {n === 15 ? <Selected /> : <Cell />}
                <Empty n={6} />
              </tr>
            );
          })}
        </tbody>
      </Grid>
    </GridPane>
    <VScroll>
      <ArrowBtn aria-label="تمرير لأعلى">
        <Icon w={9} h={5} fill="#222" color="none"><path d="M0 5 4.500 0 9 5z" /></Icon>
      </ArrowBtn>
      <VTrack><i /></VTrack>
      <ArrowBtn aria-label="تمرير لأسفل">
        <Icon w={9} h={5} fill="#222" color="none"><path d="M0 0h9L4.500 5z" /></Icon>
      </ArrowBtn>
    </VScroll>
  </SheetArea>
);

const BookWindow = () => (
  <Book>
    <TitleBar>
      <DocTitle>تقسيمة مارشال كوري ١٤٥٢ اطار  -  Excel</DocTitle>
      <SignIn>تسجيل الدخول</SignIn>
      <Spacer />
      <IconBtn $w={57} $color="#fff" aria-label="خيارات عرض الشريط">
        <Icon w={17} h={13}><rect x=".5" y=".5" width="16" height="12" /><path d="M1 3.500h15M8.500 12V6M6 8l2.500-2.500L11 8" /></Icon>
      </IconBtn>
      <IconBtn $w={57} $color="#fff" aria-label="تصغير">
        <Icon s={13}><path d="M0 6.500h13" /></Icon>
      </IconBtn>
      <IconBtn $w={57} $color="#fff" aria-label="تكبير">
        <Icon s={14} sw={1.3}><rect x="1" y="1" width="12" height="12" rx="2" /></Icon>
      </IconBtn>
      <IconBtn $w={57} $color="#fff" aria-label="إغلاق">
        <Icon s={14} sw={1.3}><path d="M1 1 13 13M13 1 1 13" /></Icon>
      </IconBtn>
    </TitleBar>
    <RibbonTabs>
      {MENU.map(([name, w], i) => <RibbonTab key={name} $w={w} $active={i === 3}>{name}</RibbonTab>)}
      <IconBtn $w={54} $color="#fff" aria-label="تلميح">
        <Icon w={16} h={21} sw={1.3}>
          <path d="M5 15v-2Q1 10 1 7a6.500 6.500 0 0 1 14 0q0 3-4 6v2zM5.500 17.500h5M6 20h4" />
        </Icon>
      </IconBtn>
      <span>أخبرني بما تريد القيام به</span>
      <Spacer />
      <IconBtn $w={58} $color="#fff" aria-label="تعليقات">
        <Icon w={18} h={17} sw={1.3}><path d="M1 1h16v11H7l-3 4v-4H1z" /></Icon>
      </IconBtn>
    </RibbonTabs>
    <RibbonBar />
    <QuickBar>
      <IconBtn $w={24} aria-label="حفظ">
        <Icon s={16} fill="#9b4fc0" color="none">
          <path d="M0 0h16v16H0z" />
          <path d="M3 1h10v7H3zM4 11h8v4H4z" fill="#fff" />
          <path d="M6 12h2v3H6z" />
        </Icon>
      </IconBtn>
      <IconBtn $w={43} aria-label="إعادة">
        <Icon w={18} h={16} color="#3b78bd" sw={3}><path d="M4 15q-5-6 1-9.500h9M11 1l5 4.500-5 4.500" /></Icon>
      </IconBtn>
      <Chevron />
      <IconBtn $w={42} aria-label="تراجع">
        <Icon w={18} h={16} color="#b0b0b0" sw={3}><path d="M14 15q5-6-1-9.500H4M7 1 2 5.500 7 10" /></Icon>
      </IconBtn>
      <Chevron color="#b0b0b0" />
      <IconBtn as="span" $w={8} />
      <LineStyle aria-label="نمط الخط"><i /><span><Caret w={6} /></span></LineStyle>
      <IconBtn $w={42} aria-label="لون الخط">
        <Icon s={20} color="#666">
          <path d="M12 1H.500v12H10" />
          <path d="M9 11 18 1" stroke="#3b78bd" strokeWidth="3" />
          <path d="M0 15h20v5H0z" fill="#000" stroke="none" />
        </Icon>
      </IconBtn>
      <Chevron />
      <IconBtn $w={42} aria-label="ارتباط">
        <Icon s={20} color="#666">
          <circle cx="8" cy="8" r="7.300" />
          <path d="M1 8h14M8 1v14M8 1Q1 8 6 15M8 1q6 6 3 12" />
          <path d="M9 17.500q-4-4 1-5h2M13 12.500h3q4 2 0 5h-4" stroke="#3b78bd" strokeWidth="2.400" />
        </Icon>
      </IconBtn>
      <IconBtn $w={30} aria-label="حماية الورقة">
        <Icon s={20} color="#777">
          <path d="M.5.500h17v14H.500zM1 5.500h16M1 10h16M6.500 1v13M12 1v13" fill="#fff" />
          <path d="M10 11h9v8h-9z" fill="#e5c878" stroke="none" />
          <path d="M12 11V9q2.500-3 5 0v2" stroke="#e0bd60" strokeWidth="1.500" />
        </Icon>
      </IconBtn>
      <IconBtn $w={42} aria-label="تخصيص">
        <Icon w={6} h={8} color="#333"><path d="M0 .5h6" /><path d="M0 4h6L3 7.500z" fill="#333" stroke="none" /></Icon>
      </IconBtn>
    </QuickBar>
    <FormulaRow>
      <NameBox>
        <input aria-label="مربع الاسم" defaultValue="H15" />
        <Caret w={8} />
      </NameBox>
      <IconBtn as="span" $w={37}><Grip /></IconBtn>
      <FxButtons>
        <IconBtn $w={46} $color="#c2c2c2" aria-label="إلغاء"><Icon s={14} sw={2}><path d="M1 1 13 13M13 1 1 13" /></Icon></IconBtn>
        <IconBtn $w={45} $color="#c2c2c2" aria-label="إدخال"><Icon w={17} h={14} sw={3}><path d="m1 7 5 5L16 1" /></Icon></IconBtn>
        <IconBtn $w={44} aria-label="إدراج دالة"><em>fx</em></IconBtn>
      </FxButtons>
      <FormulaInput>
        <input aria-label="شريط الصيغة" />
        <IconBtn $w={22} aria-label="توسيع"><Chevron s={11} sw={2} /></IconBtn>
      </FormulaInput>
    </FormulaRow>
    <Worksheet />
    <SheetBar>
      <IconBtn $w={28} aria-label="الورقة السابقة">
        <Icon w={5} h={9} fill="#bdbdbd" color="none"><path d="M0 0v9l5-4.500z" /></Icon>
      </IconBtn>
      <IconBtn $w={28} aria-label="الورقة التالية">
        <Icon w={5} h={9} fill="#bdbdbd" color="none"><path d="M5 0v9L0 4.500z" /></Icon>
      </IconBtn>
      <SheetTab>تقسيمة ١٤٥٢ اطار</SheetTab>
      <IconBtn $w={20} aria-label="ورقة جديدة">
        <Icon s={20} color="#777"><circle cx="10" cy="10" r="9.300" /><path d="M10 5v10M5 10h10" strokeWidth="2" /></Icon>
      </IconBtn>
      <Spacer />
      <IconBtn as="span" $w={30}><Grip /></IconBtn>
      <HScroll>
        <ArrowBtn aria-label="تمرير لليسار"><Icon w={5} h={9} fill="#222" color="none"><path d="M5 0v9L0 4.500z" /></Icon></ArrowBtn>
        <i />
        <ArrowBtn aria-label="تمرير لليمين"><Icon w={5} h={9} fill="#222" color="none"><path d="M0 0v9l5-4.500z" /></Icon></ArrowBtn>
      </HScroll>
    </SheetBar>
    <StatusBar>
      <span>جاهز</span>
      <IconBtn as="span" $w={20} />
      <IconBtn $w={26} aria-label="إمكانية الوصول">
        <Icon s={20} color="#555" sw={1.4}>
          <path d="M6 2a8 8 0 0 0 1 15" />
          <path d="M9 0v6M6 3l3 3 3-3M9 8l9 10M18 9l-8 9M10 9h9" />
        </Icon>
      </IconBtn>
      <span>إمكانية الوصول لذوي الاحتياجات الخاصة: اطلع على توصيات</span>
      <Spacer />
      <ViewBtn $on aria-label="عادي">
        <Icon s={16}><path d="M.5.500h15v15H.500zM5.500.5v15M10.500.5v15M.5 5.500h15M.5 10.500h15" /></Icon>
      </ViewBtn>
      <ViewBtn aria-label="تخطيط الصفحة">
        <Icon w={17} h={16}><path d="M.5.500h16v15H.500zM4.500 3.500h8v9h-8zM6 6h5M6 8h5M6 10h5" /></Icon>
      </ViewBtn>
      <ViewBtn aria-label="معاينة فواصل الصفحات">
        <Icon w={17} h={16}><path d="M.5.500h16v15H.500zM.5 9.500h10V.5M5.500.5v9" /></Icon>
      </ViewBtn>
      <ZoomBtn $w={22} $on aria-label="تصغير العرض"><Icon s={11} sw={1.2}><path d="M0 5.500h11" /></Icon></ZoomBtn>
      <ZoomSlider type="range" aria-label="التكبير" min="10" max="190" defaultValue="70" />
      <ZoomBtn $w={22} aria-label="تكبير العرض"><Icon s={11} sw={1.2}><path d="M0 5.500h11M5.500 0v11" /></Icon></ZoomBtn>
      <ZoomLevel>70%</ZoomLevel>
    </StatusBar>
  </Book>
);

/* ---------- taskbar ---------- */

const Bar = styled.footer`
  display: flex;
  align-items: center;
  padding-left: 5px;
  color: #fff;
  background: linear-gradient(90deg, #3b392f 0, #3b392f 14%, #222 19%, #1b2540 24%, #232323 29%, #232323 36%, #1b2540 40%, #1b2540 44%, #35373a 47%, #232325 53%, #1f2433 59%, #2b2222 61%, #232325 66%);
`;

const Edge = styled.i`
  width: 1px;
  height: 100%;
  background: #8a8a80;
`;

const Clock = styled.time`
  width: 88px;
  text-align: center;
  direction: rtl;
  font-size: 14px;
  line-height: 23px;
  white-space: nowrap;
`;

const Language = styled.button`
  width: 36px;
  font-size: 17px;
`;

const Weather = styled.button`
  display: flex;
  align-items: center;
  gap: 10px;
  margin-left: 10px;
  color: #fff;
  font-size: 17px;
  white-space: nowrap;
`;

const AppBtn = styled.button`
  width: ${(p) => p.$w || 62}px;
  height: 100%;
  flex: none;
  display: grid;
  place-items: center;
  color: #fff;
  background: ${(p) => (p.$on ? "rgba(255,255,255,.28)" : "none")};
  border-bottom: 3px solid transparent;
  ${(p) => p.$open && css`
    border-image: linear-gradient(90deg, transparent ${p.$on ? 0 : 5}px, #6fb2ea 0 calc(100% - ${p.$on ? 0 : 5}px), transparent 0) 3;
  `}
`;

const SearchBox = styled.label`
  width: 430px;
  height: 100%;
  display: flex;
  align-items: center;
  flex-direction: row-reverse;
  gap: 16px;
  padding: 0 14px;
  background: #f2f2f2;
  color: #222;
  border: 1px solid #ccc;
  input { flex: 1; direction: rtl; font-size: 18px; outline: 0; }
  input::placeholder { color: #333; opacity: 1; }
`;

const Start = styled.button`
  width: 60px;
  height: 100%;
  display: grid;
  place-items: center;
  background: #4b262b;
`;

/* brand mark floating above both windows and the taskbar */
const Watermark = styled.div`
  position: fixed;
  z-index: 5;
  left: 44vw;
  bottom: 24px;
  width: 231px;
  text-align: center;
  white-space: nowrap;
  pointer-events: none;
  color: rgba(180, 180, 180, 0.45);
  font: bold 38px/34px "Liberation Sans", sans-serif;
  b { display: block; font: bold 64px/76px "DejaVu Sans", sans-serif; }
`;

const Taskbar = () => (
  <Bar>
    <Edge />
    <IconBtn $w={58} $color="#fff" aria-label="الإشعارات">
      <svg width="32" height="32" viewBox="0 0 32 32">
        <path d="M11 2h20v16H19l-4 4v-4h-4z" fill="#fff" />
        <path d="M14 7h13M14 10.500h13M14 14h8" stroke="#3b392f" />
        <circle cx="11" cy="21" r="10" fill="#33332f" stroke="#999" />
        <text x="11" y="26" fontFamily="DejaVu Sans" fontSize="14" fill="#fff" textAnchor="middle">٤</text>
      </svg>
    </IconBtn>
    <Clock>٠٤:٥١ م<br />٢٠٢٥/٠٢/٢٧</Clock>
    <Language aria-label="لغة الإدخال">ع</Language>
    <IconBtn $w={38} $color="#fff" aria-label="الصوت">
      <Icon w={21} h={16} sw={1.2}><path d="M1 5.500h3l4-4v13l-4-4H1zM11 5.500q2 2.500 0 5M14 3.500q4 4.500 0 9M17 1q6 7 0 14" /></Icon>
    </IconBtn>
    <IconBtn $w={20} $color="#fff" aria-label="الشبكة">
      <Icon s={20} sw={1.3}>
        <circle cx="10" cy="10" r="9" /><path d="M1 7h18M1 13h11M10 1v18M10 1q-8 9 0 18M10 1q6 5 4 10" />
        <circle cx="15.500" cy="15.500" r="4" fill="#333" /><path d="m13 13 5 5" />
      </Icon>
    </IconBtn>
    <IconBtn $w={40} $color="#fff" aria-label="البطارية">
      <Icon w={19} h={12}><rect x=".5" y=".5" width="16" height="11" /><path d="M2.500 2.500h12v7h-12z" fill="#fff" /><path d="M18 4v4" /></Icon>
    </IconBtn>
    <IconBtn $w={20} $color="#fff" aria-label="إظهار الرموز المخفية">
      <Icon w={16} h={10} sw={1.3}><path d="m1 9 7-8 7 8" /></Icon>
    </IconBtn>
    <Weather>
      <svg width="40" height="20" viewBox="-10 0 40 20" fill="none" stroke="#fff" strokeWidth="2">
        <path d="M1 1h23v17H1zM24 4h4v14h-4M4 5.500h17M14 9.500h7M14 13.500h7" /><rect x="5" y="9" width="5" height="5" />
      </svg>
      <span dir="ltr">6°C</span>
      <span>غائم جزئيًا</span>
    </Weather>
    <Spacer />
    <AppBtn $on $open aria-label="Excel">
      <svg width="30" height="30" viewBox="0 0 30 30">
        <path d="M7 1h22v27H7z" fill="#21a366" /><path d="M7 1h11v7H7z" fill="#107c41" /><path d="M7 14h22v14H7z" fill="#185c37" />
        <path d="M18 8h11v7H18z" fill="#33a06a" /><rect x="0" y="7" width="15" height="15" rx="1" fill="#107c41" />
        <path d="m4 10 6.500 9M10.500 10 4 19" stroke="#fff" strokeWidth="2.200" />
      </svg>
    </AppBtn>
    <AppBtn aria-label="Firefox">
      <svg width="30" height="30" viewBox="0 0 30 30">
        <circle cx="15" cy="16" r="13.500" fill="#f4453c" />
        <path d="M18 1q4 4 5 6 6 5 5 11-2 8-11 10 6-6 4-12-3-4-7-4Q15 4 18 1" fill="#fbb83a" />
        <path d="M3 7l2 2 2-5 4 5q6 0 8 5l-5-1-6 7Q0 20 3 7" fill="#f6912b" />
        <circle cx="15" cy="15" r="6" fill="#7e50c0" /><path d="M9 13q5-3 9 1l-6 2z" fill="#f6912b" />
      </svg>
    </AppBtn>
    <AppBtn aria-label="البريد">
      <svg width="30" height="24" viewBox="0 0 30 24">
        <path d="M0 8 15 0l15 8v16H0z" fill="#fff" /><path d="m1 10 28-1-12 6 8 5-10-4z" fill="#222" />
      </svg>
    </AppBtn>
    <AppBtn aria-label="المتجر">
      <svg width="30" height="30" viewBox="0 0 30 30">
        <path d="M10 8V5q1-4 5-4t5 4v3" stroke="#ccc" strokeWidth="2" fill="none" />
        <path d="M0 8h30l-1 21H1z" fill="#fff" />
        <path d="M9 12h6v6H9z" fill="#f03a32" /><path d="M16 12h6v6h-6z" fill="#a87b30" />
        <path d="M9 19h6v6H9z" fill="#2fa8d8" /><path d="M16 19h6v6h-6z" fill="#f0a030" />
      </svg>
    </AppBtn>
    <AppBtn $open aria-label="مستكشف الملفات">
      <svg width="28" height="24" viewBox="0 0 28 24">
        <path d="M0 0h11l3 4h13v18H0z" fill="#f0a030" /><path d="M0 6h11l3-3h13v19H0z" fill="#fbc75c" />
        <path d="M5 24V13h18v11h-4v-6H9v6z" fill="#3c8fe0" />
      </svg>
    </AppBtn>
    <AppBtn $open aria-label="Edge">
      <svg width="30" height="30" viewBox="0 0 30 30">
        <circle cx="15" cy="15" r="14.500" fill="#1f6fd0" />
        <path d="M1 12Q4 0 15 .5 29 1 30 13q-1 8-8 7-5-1-3-5 1-6-7-7-7 0-11 4" fill="#2bb5dc" />
        <path d="M21 2q9 4 9 11-1 8-8 7-5-1-3-5 2-3 0-6z" fill="#54a77c" />
        <path d="M12 12q-3 9 5 12 6 2 11-2-3 8-13 8Q6 27 8 17q1-4 4-5" fill="#144f9c" />
        <circle cx="16" cy="15" r="3.500" fill="#222" />
        <path d="M19 15q-2 4 3 5 5 0 8-4v5l-5 2q-7 2-9-4z" fill="#222" opacity=".75" />
      </svg>
    </AppBtn>
    <AppBtn aria-label="عرض المهام" $w={64}>
      <Icon w={20} h={20} sw={1.4}>
        <path d="M1.500 0v5M1.500 11v9M7 .5v4h12v-4M7 19.500v-4h12v4" /><rect x="8" y="6" width="10" height="8" />
        <path d="M0 8h3" strokeWidth="3" />
      </Icon>
    </AppBtn>
    <AppBtn aria-label="Cortana" $w={60}>
      <Icon s={20} sw={2.500}><circle cx="10" cy="10" r="8.300" /></Icon>
    </AppBtn>
    <SearchBox>
      <Icon s={20} sw={1.5} color="#222"><circle cx="12.500" cy="7" r="6" /><path d="M8.500 11.500 1 19" /></Icon>
      <input aria-label="بحث" placeholder="اكتب هنا للبحث" />
    </SearchBox>
    <Start aria-label="ابدأ">
      <Icon s={20} fill="#fff" color="none">
        <path d="M0 3 8.500 1.800v7.700H0zM9.500 1.600 20 0v9.500H9.500zM0 10.500h8.500v7.700L0 17zM9.500 10.500H20V20L9.500 18.400z" />
      </Icon>
    </Start>
  </Bar>
);

export default function App() {
  return (
    <>
      <GlobalStyle />
      <Desktop>
        <Windows>
          <BrowserWindow />
          <BookWindow />
        </Windows>
        <Taskbar />
      </Desktop>
      <Watermark><b lang="ar">مستقل</b>mostaql.com</Watermark>
    </>
  );
}
